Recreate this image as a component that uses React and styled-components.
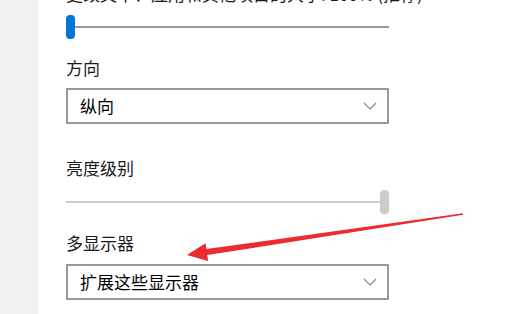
import React from "react";
import styled, { createGlobalStyle } from "styled-components";

const GlobalStyle = createGlobalStyle`
  html, body {
    margin: 0;
    padding: 0;
    background: #ffffff;
    overflow: hidden;
  }
  body {
    font-family: "Noto Sans CJK SC", "Noto Sans", sans-serif;
    color: #000000;
  }
`;

const Page = styled.div`
  position: relative;
  display: flex;
  width: 519px;
  height: 314px;
  overflow: hidden;
`;

const Sidebar = styled.div`
  width: 38px;
  flex-shrink: 0;
  background: #f2f2f2;
`;

const Content = styled.div`
  display: flex;
  flex-direction: column;
  width: 323px;
  padding-left: 28px;
`;

/* the page is scrolled: only the foot of this line shows */
const Caption = styled.div`
  margin-top: -16px;
  font-size: 17px;
  line-height: 20px;
  white-space: nowrap;
  color: #1a1a1a;
`;

const Label = styled.div`
  margin-top: ${(p) => p.$gap}px;
  font-size: 17px;
  line-height: 20px;
  color: #1a1a1a;
`;

const SliderRow = styled.div`
  display: flex;
  align-items: center;
  height: 24px;
  margin-top: ${(p) => p.$gap}px;
`;

const Track = styled.div`
  height: 2px;
  background: ${(p) => p.$color};
`;

const Thumb = styled.div`
  width: 9px;
  height: 24px;
  flex-shrink: 0;
  border-radius: 4px;
  background: ${(p) => p.$color};
`;

const Select = styled.div`
  display: flex;
  align-items: center;
  justify-content: space-between;
  box-sizing: border-box;
  height: 36px;
  margin-top: ${(p) => p.$gap}px;
  padding: 0 10px 0 12px;
  border: 2px solid #999999;
  background: #ffffff;
  font-size: 17px;
  line-height: 20px;
`;

const Chevron = () => (
  <svg width="14" height="8" viewBox="0 0 14 8">
    <path d="M1 1 L7 7 L13 1" fill="none" stroke="#8a8a8a" strokeWidth="1.2" />
  </svg>
);

const Overlay = styled.svg`
  position: absolute;
  left: 0;
  top: 0;
  pointer-events: none;
`;

function Slider({ value, fill, rest, thumb, gap }) {
  return (
    <SliderRow $gap={gap}>
      <Track $color={fill} style={{ flex: value }} />
      <Thumb $color={thumb} />
      <Track $color={rest} style={{ flex: 100 - value }} />
    </SliderRow>
  );
}

export default function App() {
  return (
    <>
      <GlobalStyle />
      <Page>
        <Sidebar />
        <Content>
          <Caption>更改文本、应用和其他项目的大小: 100% (推荐)</Caption>
          <Slider value={0} fill="#0078d7" rest="#999999" thumb="#0078d7" gap={11} />
          <Label $gap={19}>方向</Label>
          <Select $gap={10}>
            <span>纵向</span>
            <Chevron />
          </Select>
          <Label $gap={34}>亮度级别</Label>
          <Slider value={100} fill="#cccccc" rest="#cccccc" thumb="#cccccc" gap={12} />
          <Label $gap={19}>多显示器</Label>
          <Select $gap={11}>
            <span>扩展这些显示器</span>
            <Chevron />
          </Select>
        </Content>
        <Overlay width="519" height="314" viewBox="0 0 519 314">
          <polygon
            points="187,255 205.5,243.2 206.4,249.1 462.9,213.2 463.1,214.8 207.2,255.1 208.1,261"
            fill="#ec2a2f"
          />
        </Overlay>
      </Page>
    </>
  );
}
